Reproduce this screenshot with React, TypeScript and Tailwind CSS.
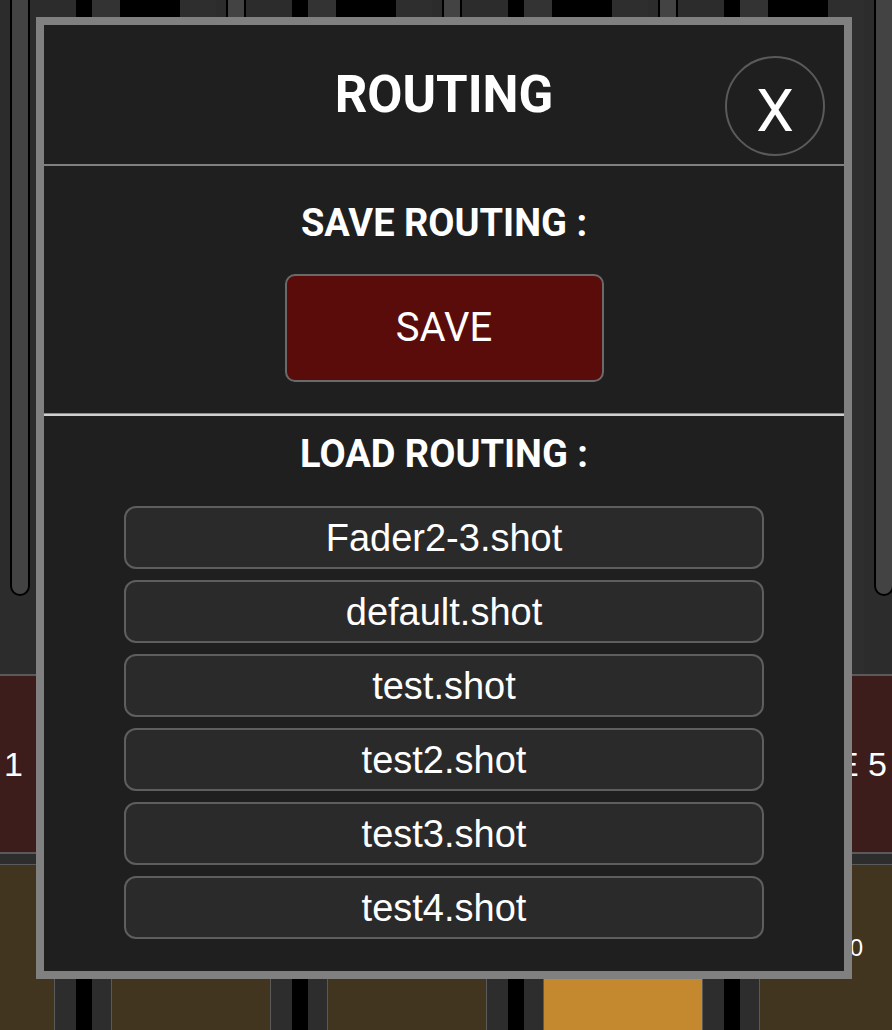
const files = [
  'Fader2-3.shot',
  'default.shot',
  'test.shot',
  'test2.shot',
  'test3.shot',
  'test4.shot',
];

const channels = [0, 1, 2, 3, 4];
const cellLabels = ['-100', '-100', '-100', '-100', ''];

const sans = "font-['Liberation_Sans',Arial,sans-serif]";
const ui = "font-['Roboto','Liberation_Sans',sans-serif]";

const Console = () => {
  return (
    <div className="flex flex-col w-[892px] h-[1030px]">
      {/* faders */}
      <div className="flex h-[674px] bg-[#2c2c2c] shrink-0">
        {channels.map((k) => (
          <div key={k} className="flex w-[216px] shrink-0">
            <div className="w-[10px] shrink-0" />
            <div className="w-[20px] h-[596px] shrink-0 rounded-b-[10px] border-2 border-t-0 border-black bg-[#434343]" />
            <div className="w-[46px] shrink-0" />
            <div className="w-[16px] shrink-0 bg-black" />
            <div className="w-[28px] shrink-0 bg-[#333333]" />
            <div className="w-[60px] shrink-0 bg-black" />
            <div className="w-[36px] shrink-0 bg-[#2e2e2e]" />
          </div>
        ))}
      </div>
      <div className="h-[2px] bg-[#5a5a5a] shrink-0" />
      {/* labels */}
      <div
        className={`flex items-center justify-between h-[176px] shrink-0 bg-[#3d1c1c] text-white text-[34px] leading-none ${sans}`}
      >
        <div className="pl-[4px] whitespace-nowrap">1</div>
        <div className="pr-[5px] whitespace-nowrap">SOURCE 5</div>
      </div>
      <div className="h-[2px] bg-[#5a5a5a] shrink-0" />
      <div className="h-[10px] bg-[#2d2d2d] shrink-0" />
      <div className="h-[1px] bg-[#5a5a5a] shrink-0" />
      {/* bottom strips */}
      <div className="flex flex-1 bg-[#41351f]">
        <div className="w-[54px] shrink-0" />
        {channels.map((k) => (
          <div key={k} className="flex w-[216px] shrink-0">
            <div className="flex w-[58px] shrink-0 border-x border-[#5a5a5a]">
              <div className="w-[21px] bg-[#2d2d2d]" />
              <div className="w-[16px] bg-black" />
              <div className="w-[19px] bg-[#2d2d2d]" />
            </div>
            <div
              className={`flex flex-1 items-center justify-center text-white text-[24px] ${sans} ${
                k === 2 ? 'bg-[#c4882f]' : 'bg-[#41351f]'
              }`}
            >
              {cellLabels[k]}
            </div>
          </div>
        ))}
      </div>
    </div>
  );
};

const RoutingModal = () => {
  return (
    <div className="absolute left-[36px] top-[17px] w-[816px] h-[962px] border-8 border-[#808080] bg-[#1f1f1f] flex flex-col text-white">
      <div className="relative flex items-center justify-center h-[139px] shrink-0">
        <h1 className={`text-[51px] font-bold leading-none ${ui}`}>ROUTING</h1>
        <button
          className={`absolute right-[19px] top-[31px] w-[100px] h-[100px] rounded-full border-2 border-[#5a5a5a] flex items-center justify-center pt-[10px] text-[60px] leading-none ${ui}`}
        >
          X
        </button>
      </div>
      <div className="h-[2px] bg-[#808080] shrink-0" />

      <div className="flex flex-col items-center shrink-0">
        <h2 className={`mt-[38px] text-[38px] font-bold leading-none ${ui}`}>
          SAVE ROUTING :
        </h2>
        <button
          className={`mt-[32px] w-[319px] h-[108px] rounded-[10px] border-2 border-[#6a6a6a] bg-[#5a0c0a] flex items-center justify-center text-[40px] leading-none ${ui}`}
        >
          SAVE
        </button>
      </div>

      <div className="mt-[31px] h-[3px] shrink-0 border-t border-[#8c8c8c] bg-[#d0d0d0]" />

      <div className="flex flex-col items-center">
        <h2 className={`mt-[19px] text-[38px] font-bold leading-none ${ui}`}>
          LOAD ROUTING :
        </h2>
        <div className="mt-[33px] flex flex-col gap-[11px]">
          {files.map((name) => (
            <button
              key={name}
              className={`w-[640px] h-[63px] rounded-[12px] border-2 border-[#5e5e5e] bg-[#2a2a2a] flex items-center justify-center text-[38px] leading-none ${sans}`}
            >
              {name}
            </button>
          ))}
        </div>
      </div>
    </div>
  );
};

export default function App() {
  return (
    <div className="relative w-[892px] h-[1030px] overflow-hidden bg-[#2c2c2c]">
      <Console />
      <RoutingModal />
    </div>
  );
}
